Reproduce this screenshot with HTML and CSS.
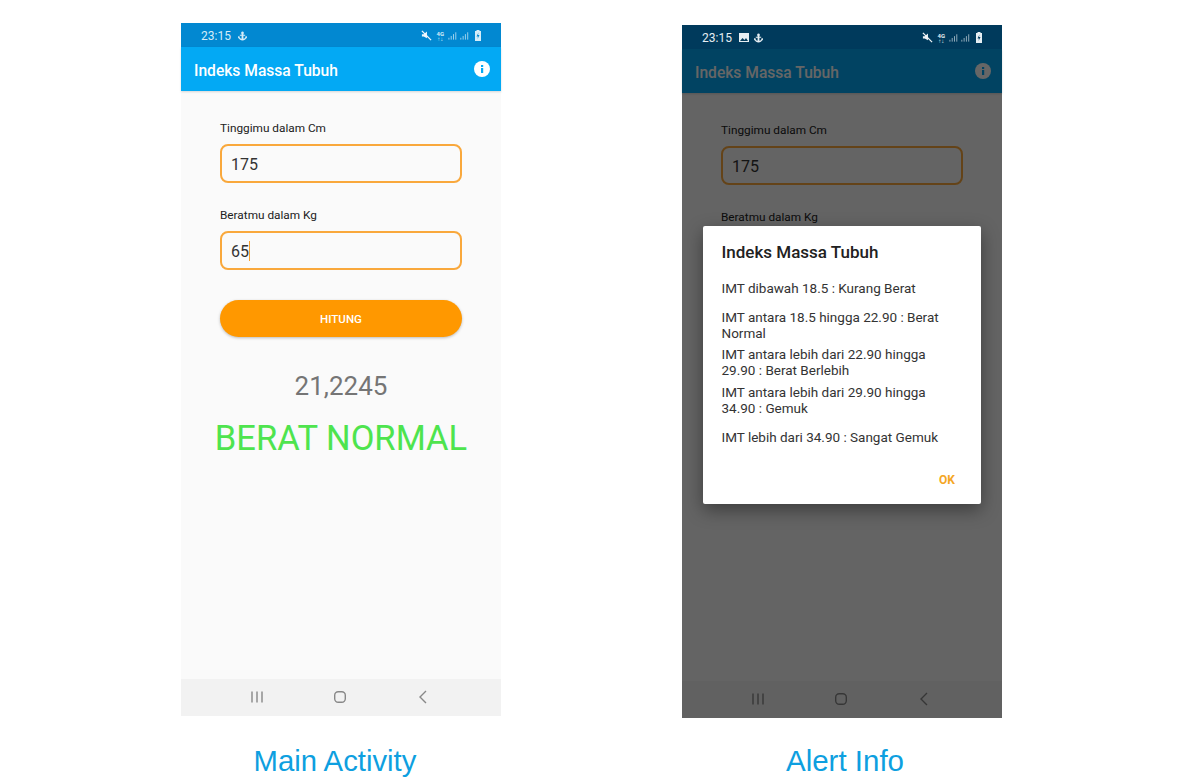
FILE: index.html
```html
<!DOCTYPE html>
<html lang="en">
<head>
  <meta charset="UTF-8">
  <title>Indeks Massa Tubuh</title>
  <link rel="stylesheet" href="styles.css">
</head>
<body>

  <div class="shots">

    <div class="shot shot-main">
      <div class="phone">
        <div class="status-bar">
          <span class="clock">23:15</span>
          <svg class="status-icon" width="9" height="10" viewBox="0 0 10 11"><path d="M5 0.5a1.6 1.6 0 0 1 1 2.8V4h2V5.2H6V8.6c1.2-.1 2-.8 2.3-1.6L7.4 6.6 9.8 5.6 10 8.2 9.200 7.800C8.600 9.200 7 10.400 5 10.400S1.400 9.200.8 7.800L0 8.200.2 5.600l2.400 1L1.700 7C2 7.800 2.800 8.500 4 8.600V5.200H2V4h2v-.7a1.6 1.6 0 0 1 1-2.800z" fill="#d5ecf8"/></svg>
          <div class="status-right">
            <svg width="11" height="11" viewBox="0 0 12 12"><path d="M1 4.500h2L6.500 1.500V9L3 7H1z" fill="#f0f8fd"/><path d="M1 1l10 10" stroke="#f0f8fd" stroke-width="1.400"/></svg>
            <span class="net">4G<br>↑↓</span>
            <svg width="22" height="9" viewBox="0 0 24 9"><path d="M1 9V7M3.500 9V5M6 9V3M8.500 9V1M14 9V7M16.500 9V5M19 9V3M21.500 9V1" stroke="#a9d6ef" stroke-width="1"/></svg>
            <svg width="8" height="11" viewBox="0 0 8 11"><path d="M2.500 0h3v1H7v10H1V1h1.500z" fill="#d5ecf8"/><path d="M4.500 2.500 2.500 6.500h1.500L3.500 9l2-4H4z" fill="#0288d1"/></svg>
          </div>
        </div>
        <div class="app-bar">
          <span class="app-title">Indeks Massa Tubuh</span>
          <svg class="info" width="16" height="16" viewBox="0 0 16 16"><circle cx="8" cy="8" r="8" fill="#fff"/><rect x="7" y="7" width="2.200" height="5" fill="#03a9f4"/><rect x="7" y="4" width="2.200" height="2" fill="#03a9f4"/></svg>
        </div>
        <div class="content">
          <label class="field-label">Tinggimu dalam Cm</label>
          <div class="field">175</div>
          <label class="field-label second">Beratmu dalam Kg</label>
          <div class="field">65<span class="caret"></span></div>
          <button class="hitung">HITUNG</button>
          <div class="score">21,2245</div>
          <div class="verdict">BERAT NORMAL</div>
        </div>
        <div class="nav-bar">
          <svg width="14" height="14" viewBox="0 0 14 14"><path d="M2 1.500v11M7 1.500v11M12 1.500v11" stroke="#888" stroke-width="1.400"/></svg>
          <svg width="14" height="14" viewBox="0 0 14 14"><rect x="1.700" y="1.700" width="10.600" height="10.600" rx="3.500" fill="none" stroke="#888" stroke-width="1.400"/></svg>
          <svg width="14" height="14" viewBox="0 0 14 14"><path d="M10 1 4 7l6 6" fill="none" stroke="#888" stroke-width="1.400"/></svg>
        </div>
      </div>
      <p class="caption">Main Activity</p>
    </div>

    <div class="shot shot-alert">
      <div class="phone">
        <div class="status-bar">
          <span class="clock">23:15</span>
          <svg class="status-icon" width="10" height="9" viewBox="0 0 10 9"><path d="M0 0h10v9H0z" fill="#e6eef3"/><path d="M1 8l2.500-3 2 2L7 5l2 3z" fill="#003a5c"/></svg>
          <svg class="status-icon" width="9" height="10" viewBox="0 0 10 11"><path d="M5 0.5a1.6 1.6 0 0 1 1 2.8V4h2V5.2H6V8.6c1.2-.1 2-.8 2.3-1.6L7.4 6.6 9.8 5.600 10 8.200 9.200 7.800C8.600 9.200 7 10.400 5 10.400S1.400 9.200.8 7.800L0 8.200.2 5.600l2.400 1L1.700 7C2 7.800 2.800 8.500 4 8.600V5.200H2V4h2v-.7a1.6 1.6 0 0 1 1-2.800z" fill="#e6eef3"/></svg>
          <div class="status-right">
            <svg width="11" height="11" viewBox="0 0 12 12"><path d="M1 4.500h2L6.500 1.500V9L3 7H1z" fill="#f0f4f7"/><path d="M1 1l10 10" stroke="#f0f4f7" stroke-width="1.400"/></svg>
            <span class="net">4G<br>↑↓</span>
            <svg width="22" height="9" viewBox="0 0 24 9"><path d="M1 9V7M3.500 9V5M6 9V3M8.500 9V1M14 9V7M16.500 9V5M19 9V3M21.500 9V1" stroke="#9db4c2" stroke-width="1"/></svg>
            <svg width="8" height="11" viewBox="0 0 8 11"><path d="M2.500 0h3v1H7v10H1V1h1.500z" fill="#e6eef3"/><path d="M4.500 2.500 2.500 6.500h1.500L3.500 9l2-4H4z" fill="#003a5c"/></svg>
          </div>
        </div>
        <div class="app-bar">
          <span class="app-title">Indeks Massa Tubuh</span>
          <svg class="info" width="16" height="16" viewBox="0 0 16 16"><circle cx="8" cy="8" r="8" fill="#fff"/><rect x="7" y="7" width="2.200" height="5" fill="#03a9f4"/><rect x="7" y="4" width="2.200" height="2" fill="#03a9f4"/></svg>
        </div>
        <div class="content">
          <label class="field-label">Tinggimu dalam Cm</label>
          <div class="field">175</div>
          <label class="field-label second">Beratmu dalam Kg</label>
        </div>
        <div class="nav-bar">
          <svg width="14" height="14" viewBox="0 0 14 14"><path d="M2 1.500v11M7 1.500v11M12 1.500v11" stroke="#888" stroke-width="1.400"/></svg>
          <svg width="14" height="14" viewBox="0 0 14 14"><rect x="1.700" y="1.700" width="10.600" height="10.600" rx="3.500" fill="none" stroke="#888" stroke-width="1.400"/></svg>
          <svg width="14" height="14" viewBox="0 0 14 14"><path d="M10 1 4 7l6 6" fill="none" stroke="#888" stroke-width="1.400"/></svg>
        </div>
        <div class="scrim"></div>
        <div class="dialog">
          <h2>Indeks Massa Tubuh</h2>
          <p class="gap-after">IMT dibawah 18.5 : Kurang Berat</p>
          <p>IMT antara 18.5 hingga 22.90 : Berat Normal</p>
          <p class="gap-small">IMT antara lebih dari 22.90 hingga 29.90 : Berat Berlebih</p>
          <p class="gap-after">IMT antara lebih dari 29.90 hingga 34.90 : Gemuk</p>
          <p>IMT lebih dari 34.90 : Sangat Gemuk</p>
          <div class="dialog-actions"><span class="ok">OK</span></div>
        </div>
      </div>
      <p class="caption">Alert Info</p>
    </div>

  </div>

</body>
</html>
```

FILE: styles.css
```css
* {
  box-sizing: border-box;
}

html, body {
  height: 100%;
}

body {
  margin: 0;
  background: #fff;
  font-family: Roboto, "Liberation Sans", sans-serif;
  overflow: hidden;
}

.shots {
  display: flex;
  padding-left: 181px;
  gap: 181px;
}

.shot {
  width: 320px;
}

.shot-main {
  padding-top: 23px;
}

.shot-alert {
  padding-top: 25px;
}

.phone {
  position: relative;
  width: 320px;
  height: 693px;
  display: flex;
  flex-direction: column;
  background: #fafafa;
}

.status-bar {
  flex: 0 0 24px;
  display: flex;
  align-items: center;
  gap: 5px;
  padding: 1px 19px 0 20px;
  background: #0288d1;
  color: #d5ecf8;
  font-size: 12px;
}

.shot-alert .status-bar {
  position: relative;
  z-index: 3;
  background: #003a5c;
  color: #e6eef3;
}

.clock {
  margin-right: 2px;
}

.status-right {
  margin-left: auto;
  display: flex;
  align-items: center;
  gap: 4px;
}

.net {
  font-size: 6px;
  line-height: 5px;
  font-weight: 700;
  text-align: center;
}

.app-bar {
  flex: 0 0 44px;
  display: flex;
  align-items: center;
  justify-content: space-between;
  padding: 0 11px 0 13px;
  background: #03a9f4;
  box-shadow: 0 1px 2px rgba(0, 0, 0, 0.15);
  z-index: 1;
}

.app-title {
  padding-top: 3px;
  color: #fff;
  font-size: 15.600px;
  font-weight: 500;
}

.content {
  flex: 1;
  display: flex;
  flex-direction: column;
  padding: 30px 39px 0;
}

.field-label {
  color: #212121;
  font-size: 11.800px;
  line-height: 14px;
  height: 16px;
}

.field-label.second {
  margin-top: 25px;
}

.field {
  width: 242px;
  height: 39px;
  margin-top: 7px;
  padding: 1px 0 0 9px;
  display: flex;
  align-items: center;
  border: 2px solid #f9a83c;
  border-radius: 8px;
  color: #333;
  font-size: 16px;
}

.caret {
  width: 1px;
  height: 20px;
  background: #f9a02b;
}

.hitung {
  width: 242px;
  height: 37px;
  margin-top: 30px;
  padding-top: 2px;
  border: none;
  border-radius: 19px;
  background: #ff9800;
  box-shadow: 0 1px 3px rgba(0, 0, 0, 0.25);
  color: #fff;
  font-family: inherit;
  font-size: 11.500px;
  font-weight: 500;
}

.score {
  margin-top: 33px;
  width: 242px;
  text-align: center;
  color: #757575;
  font-size: 26px;
  line-height: 32px;
}

.verdict {
  margin: 15px -20px 0;
  text-align: center;
  color: #4ee44e;
  font-size: 34.500px;
  line-height: 42px;
}

.nav-bar {
  flex: 0 0 37px;
  display: flex;
  align-items: center;
  justify-content: center;
  gap: 69px;
  padding: 0 2px 2px 0;
  background: #f2f2f2;
}

.scrim {
  position: absolute;
  inset: 0;
  background: rgba(0, 0, 0, 0.6);
  z-index: 2;
}

.dialog {
  position: absolute;
  left: 21px;
  top: 201px;
  width: 278px;
  height: 278px;
  padding: 16px 19px 0 18.500px;
  background: #fff;
  border-radius: 2px;
  box-shadow: 0 6px 18px rgba(0, 0, 0, 0.4);
  z-index: 3;
}

.dialog h2 {
  margin: 0 0 18px;
  color: #212121;
  font-size: 17px;
  font-weight: 500;
  line-height: 20px;
}

.dialog p {
  margin: 0 0 5px;
  color: #333;
  font-size: 13.500px;
  line-height: 16px;
}

.dialog p.gap-after {
  margin-bottom: 13px;
}

.dialog p.gap-small {
  margin-bottom: 6px;
}

.dialog-actions {
  margin-top: 28px;
  display: flex;
  justify-content: flex-end;
  padding-right: 7px;
}

.ok {
  color: #f5a623;
  font-size: 12px;
  font-weight: 700;
}

.caption {
  margin: 27px 0 0 -12px;
  font-family: "Liberation Sans", Arial, sans-serif;
  text-align: center;
  color: #0e9fe0;
  font-size: 29.300px;
  line-height: 36px;
}

.shot-alert .caption {
  margin: 25px 0 0 6px;
  font-size: 29.500px;
}
```
